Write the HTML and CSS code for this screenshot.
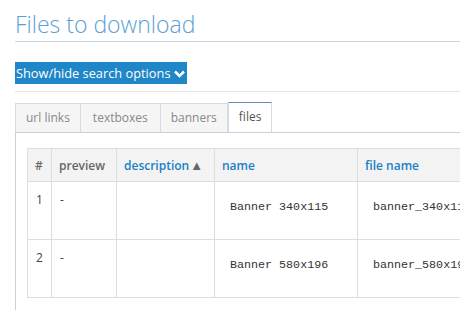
FILE: index.html
```html
<!DOCTYPE html>
<html lang="en">
<head>
    <meta charset="UTF-8">
    <title>Files to download</title>
    <link rel="stylesheet" href="styles.css">
</head>
<body>
    <div id="page">
        <h1 class="page-title">Files to download</h1>
        <div class="search-toggle">
            <span class="toggle-btn">Show/hide search options
                <svg class="chevron" width="11" height="8" viewBox="0 0 11 8"><path d="M1 1.5 L5.5 6 L10 1.5" fill="none" stroke="#fff" stroke-width="2.6"/></svg>
            </span>
        </div>
        <ul class="tabs">
            <li class="tab">url links</li>
            <li class="tab">textboxes</li>
            <li class="tab">banners</li>
            <li class="tab active">files</li>
        </ul>
        <div class="tab-content">
            <table class="files">
                <thead>
                    <tr>
                        <th class="col-num">#</th>
                        <th class="col-preview">preview</th>
                        <th class="col-desc"><a href="#">description</a><span class="sort">&#9650;</span></th>
                        <th class="col-name"><a href="#">name</a></th>
                        <th class="col-file"><a href="#">file name</a></th>
                    </tr>
                </thead>
                <tbody>
                    <tr>
                        <td>1</td>
                        <td>-</td>
                        <td></td>
                        <td><span class="mono">Banner 340x115</span></td>
                        <td><span class="mono">banner_340x115.png</span></td>
                    </tr>
                    <tr>
                        <td>2</td>
                        <td>-</td>
                        <td></td>
                        <td><span class="mono">Banner 580x196</span></td>
                        <td><span class="mono">banner_580x196.png</span></td>
                    </tr>
                </tbody>
            </table>
        </div>
    </div>
</body>
</html>
```

FILE: styles.css
```css
body {
    margin: 0;
    padding: 0;
    font-family: "Open Sans", Arial, sans-serif;
    font-size: 12px;
    color: #444;
    background-color: #fff;
    overflow: hidden;
}

#page {
    padding: 0 0 0 15px;
    width: 560px;
}

.page-title {
    margin: 0;
    padding-top: 7px;
    font-size: 23px;
    font-weight: 300;
    line-height: 34px;
    color: #5b9fd6;
    border-bottom: 1px solid #c9d8e4;
}

.search-toggle {
    padding: 20px 0 7px;
    border-bottom: 1px solid #e2e6ea;
}

.toggle-btn {
    display: inline-flex;
    align-items: center;
    gap: 4px;
    height: 22px;
    padding: 0 2px 0 1px;
    background-color: #1f86c8;
    color: #fff;
    font-size: 12.8px;
}

.chevron {
    margin-top: 1px;
}

.tabs {
    display: flex;
    list-style: none;
    margin: 11px 0 0;
    padding: 0;
}

.tab {
    padding: 0 10px;
    height: 28px;
    line-height: 28px;
    background-color: #f5f5f5;
    color: #888;
    font-size: 12px;
    border: 1px solid #d3dce5;
    border-left: none;
    border-bottom: none;
}

.tab:first-child {
    border-left: 1px solid #d3dce5;
}

.tab:nth-child(2) {
    padding: 0 12px;
}

.tab.active {
    background-color: #fff;
    color: #555;
    border-top: 1px solid #5e90c4;
    border-left: 1px solid #d3dce5;
    border-right: 1px solid #d3dce5;
    margin-top: -1px;
    height: 29px;
    padding: 0 10px;
}

.tab-content {
    border-top: 1px solid #c6d2de;
    border-left: 1px solid #c6d2de;
    padding: 15px 0 20px 11px;
}

.files {
    border-collapse: collapse;
    table-layout: fixed;
    width: 531px;
}

.files th,
.files td {
    border: 1px solid #dddddd;
    text-align: left;
    vertical-align: top;
}

.files th {
    height: 32px;
    padding: 0 7px;
    background-color: #f3f3f3;
    color: #666;
    font-weight: 600;
    vertical-align: middle;
}

.files th a {
    color: #1a80c4;
    text-decoration: none;
}

.sort {
    margin-left: 1px;
    color: #666;
    font-size: 13px;
}

.files td {
    height: 58px;
    padding: 8px 8px 0;
    line-height: 20px;
    box-sizing: border-box;
}

.col-num { width: 9px; }
.col-preview { width: 50px; }
.col-desc { width: 83px; }
.col-name { width: 128px; }
.col-file { width: 190px; }

.mono {
    display: inline-block;
    margin: 7px 0 0 7px;
    font-family: "Liberation Mono", monospace;
    font-size: 11.7px;
    color: #333;
}
```
